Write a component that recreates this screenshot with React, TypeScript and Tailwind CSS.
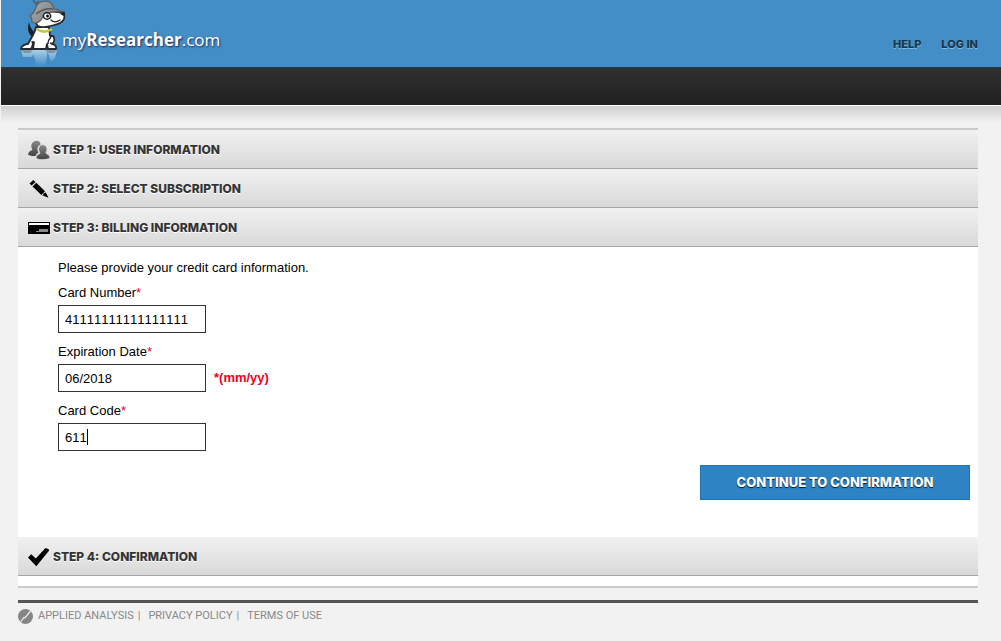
import { useState } from "react";
import type { ReactNode } from "react";

function DogLogo() {
  return (
    <svg className="h-[67px] w-12 shrink-0" viewBox="0 0 48 67" fill="none">
      <defs>
        <linearGradient id="reflection" x1="0" y1="50" x2="0" y2="66" gradientUnits="userSpaceOnUse">
          <stop offset="0" stopColor="#fff" stopOpacity="0.55" />
          <stop offset="1" stopColor="#fff" stopOpacity="0" />
        </linearGradient>
        <linearGradient id="hat" x1="12" y1="4" x2="32" y2="20" gradientUnits="userSpaceOnUse">
          <stop offset="0" stopColor="#a8a8a8" />
          <stop offset="1" stopColor="#858585" />
        </linearGradient>
      </defs>
      <path d="M3 50h14l-3 7H5zM14 50h16l-3 16h-8zM29 50h10l-2 8-4 4z" fill="url(#reflection)" />
      <path d="M3 50h12l-3 3H6zM27 50h12l-3 3h-6z" fill="#3c3c3c" opacity="0.35" />
      <path d="M15 37C10 34 9 29 11 22c1 4 2 7 6 11z" fill="#1c1f24" />
      <path
        d="M18 27c-1 6-5 11-8 17-3 0-7 2-7 5h11l2-7-1 7h13l1-5 1 5h8c1-3-2-5-4-5 3-2 3-6 1-8h-3l-1-9z"
        fill="#fff"
        stroke="#26292d"
        strokeWidth="1.8"
        strokeLinejoin="round"
      />
      <path d="M14 41c1 3 1 5-1 7M30 44c0-3 1-5 3-7M32 43l4 1" stroke="#26292d" strokeWidth="1.4" />
      <path
        d="M18 18c3-4 7-6 12-7l16 2c1 4 0 8-4 10-3 2-7 2-10 3-4 1-8 2-12 0-2-2-3-5-2-8z"
        fill="#fff"
        stroke="#26292d"
        strokeWidth="1.6"
        strokeLinejoin="round"
      />
      <path d="m42 11 5 1-1 4c-3-1-4-2-4-5z" fill="#222" />
      <path d="M19 29c5 4 10 3 15 0" stroke="#c9c83f" strokeWidth="2.6" />
      <path
        d="M18 7c3-7 14-8 17-1l1 3c4 0 6 1 8 3-7-1-12 0-16 2-3 2-4 4-5 6-3 3-6 4-9 2 0-3 0-5-2-6 4-3 5-6 6-9z"
        fill="url(#hat)"
        stroke="#5b5d60"
        strokeWidth="1.2"
        strokeLinejoin="round"
      />
      <path d="m15 0 3 4 3-3M18 14c5-4 11-6 17-5" stroke="#56585b" strokeWidth="1.4" />
      <ellipse cx="29" cy="16" rx="3.600" ry="3.200" fill="#fff" stroke="#222" strokeWidth="1.600" />
      <circle cx="29.500" cy="16" r="1.500" fill="#111" />
      <path d="M33 20c3 3 6 2 9 0" stroke="#222" strokeWidth="1.300" strokeLinecap="round" />
    </svg>
  );
}

function UsersIcon() {
  return (
    <svg className="h-5 w-[22px]" viewBox="0 0 22 20">
      <defs>
        <linearGradient id="users" x1="0" y1="0" x2="0" y2="1">
          <stop offset="0" stopColor="#8b8b8b" />
          <stop offset="1" stopColor="#414141" />
        </linearGradient>
      </defs>
      <path
        d="M7.500 1C10.500.2 12.500 2 12.500 4.500c-2.200 1-3.400 3-3 5.500.1 1 .5 2 1 2.700-1.500.8-2.500 1.500-3 3.300-3 .2-5.500-.2-7.500-1.200.2-2.800 2-3.800 4.100-4.800.3-.6 0-1-.3-1.500C2.500 5 4 1.500 7.500 1z"
        fill="url(#users)"
      />
      <path
        d="M14.500 4.800c3.400 0 5 2.900 4.200 6-.2.900-.8 1.600-.8 2.300.2 1 3.900 1.400 4.100 5-2.500 1.700-11 2-14 .2.200-3.800 3.500-4 4-5 .1-.7-.8-1.500-1.100-2.500-.7-3 .6-6 3.600-6z"
        fill="url(#users)"
        stroke="#e8e8e8"
        strokeWidth="0.600"
      />
    </svg>
  );
}

function PencilIcon() {
  return (
    <svg className="h-5 w-[22px]" viewBox="0 0 22 20">
      <path d="m1.500 4.500 3.800-3.500 2.200 2L3.700 6.600zM4.500 7.400 8.300 3.800l8.700 8.400-3.600 3.900zM17.500 13l3 5.700-6.300-2.500 1.100-.4.300-1.500 1.600-.3z" />
    </svg>
  );
}

function CardIcon() {
  return (
    <svg className="h-5 w-[22px]" viewBox="0 0 22 20">
      <rect x="0" y="4" width="22" height="12" />
      <path d="M1 5h20v2H1z" fill="#fff" />
      <path d="M11 11h9v3H8v-1h3z" fill="#888" />
    </svg>
  );
}

function CheckIcon() {
  return (
    <svg className="h-5 w-[22px]" viewBox="0 0 22 20">
      <path d="m0 10.500 3.200-3.200 4.600 4.200L17.500 1l3.300 1.200.2 1.500L8.300 19.200z" />
    </svg>
  );
}

function StepHeader({ icon, title }: { icon: ReactNode; title: string }) {
  return (
    <h2>
      <button
        type="button"
        className="flex w-full items-center gap-[3px] border-b border-[#a6a6a6] bg-linear-to-b from-[#f1f1f1] to-[#d9d9d9] pt-0.5 pl-[10px] text-left text-[12px] leading-9 font-extrabold text-[#333] text-shadow-[0_1px_0_#fff]"
      >
        {icon}
        {title}
      </button>
    </h2>
  );
}

type FieldProps = {
  id: string;
  label: string;
  value: string;
  onChange: (value: string) => void;
  children?: ReactNode;
};

function Field({ id, label, value, onChange, children }: FieldProps) {
  return (
    <div>
      <label htmlFor={id} className="mb-0.5 block leading-5">
        {label}
        <span className="text-[#f00020]">*</span>
      </label>
      <div className="relative flex items-center gap-2">
        <input
          id={id}
          value={value}
          onChange={(event) => onChange(event.target.value)}
          className="h-7 w-[148px] border border-[#333] bg-white px-1.5 text-[13px] outline-none [font-kerning:none]"
        />
        {children}
      </div>
    </div>
  );
}

export default function App() {
  const [cardNumber, setCardNumber] = useState("41111111111111111");
  const [expiration, setExpiration] = useState("06/2018");
  const [code, setCode] = useState("611");

  return (
    <div className="min-h-screen bg-[#f2f2f2] pl-px font-['Inter',sans-serif]">
      <header className="flex h-[67px] items-start justify-between bg-[#438ec7] pr-[23px] pl-[17px]">
        <a href="#" className="flex text-white">
          <DogLogo />
          <span className="-ml-1 pt-6 font-['Open_Sans',sans-serif] text-[17px] leading-8 text-shadow-[1px_1px_2px_#225]">
            my<b>Researcher</b>.com
          </span>
        </a>
        <nav className="flex gap-5 pt-9 text-[11px] leading-4 font-extrabold text-[#16374f] text-shadow-[0_1px_0_#8cb8d9]">
          <a href="#">HELP</a>
          <a href="#">LOG IN</a>
        </nav>
      </header>
      <div className="h-[38px] border-t border-[#1c3c52] bg-linear-to-b from-[#303030] to-[#202020]" />
      <div className="h-[18px] border-t border-white bg-linear-to-b from-[#d0d0d0] to-[#f2f2f2]" />

      <main className="mt-[5px] mr-[23px] ml-[17px]">
        <div className="border-y-2 border-[#cacaca] bg-white pb-[10px]">
          <StepHeader icon={<UsersIcon />} title="STEP 1: USER INFORMATION" />
          <StepHeader icon={<PencilIcon />} title="STEP 2: SELECT SUBSCRIPTION" />
          <StepHeader icon={<CardIcon />} title="STEP 3: BILLING INFORMATION" />
          <form
            className="flex flex-col gap-[9px] pt-[11px] pr-2 pb-[37px] pl-10 font-['Liberation_Sans',Arial,sans-serif] text-[13px] text-black"
            onSubmit={(event) => event.preventDefault()}
          >
            <p className="-mb-1 leading-5">Please provide your credit card information.</p>
            <Field id="card-number" label="Card Number" value={cardNumber} onChange={setCardNumber} />
            <Field id="expiration" label="Expiration Date" value={expiration} onChange={setExpiration}>
              <b className="text-[#f00020]">*(mm/yy)</b>
            </Field>
            <Field id="card-code" label="Card Code" value={code} onChange={setCode}>
              <span className="absolute top-1.5 left-7 ml-px h-4 w-px bg-black" />
            </Field>
            <button
              type="submit"
              className="mt-[5px] h-[35px] w-[270px] self-end border border-[#2474b3] bg-[#2e83c5] font-['Inter',sans-serif] text-[13px] font-extrabold text-white text-shadow-[0_1px_1px_#111]"
            >
              CONTINUE TO CONFIRMATION
            </button>
          </form>
          <StepHeader icon={<CheckIcon />} title="STEP 4: CONFIRMATION" />
        </div>
      </main>

      <footer className="mt-3 mr-[23px] ml-[17px] border-t-[3px] border-[#555] pt-1">
        <nav className="flex items-center font-['Roboto',sans-serif] text-[11px] leading-[18px] text-[#888]">
          <svg className="mr-[5px] size-[15px]" viewBox="0 0 15 15" fill="none">
            <circle cx="7.500" cy="7.500" r="7.500" fill="#858585" />
            <path d="M2.500 13 6 8.500l1 .3L12.500 2" stroke="#f2f2f2" strokeWidth="1.200" />
          </svg>
          <a href="#">APPLIED ANALYSIS</a>
          <span className="mr-2 ml-1">|</span>
          <a href="#">PRIVACY POLICY</a>
          <span className="mr-2 ml-1">|</span>
          <a href="#">TERMS OF USE</a>
        </nav>
      </footer>
    </div>
  );
}
